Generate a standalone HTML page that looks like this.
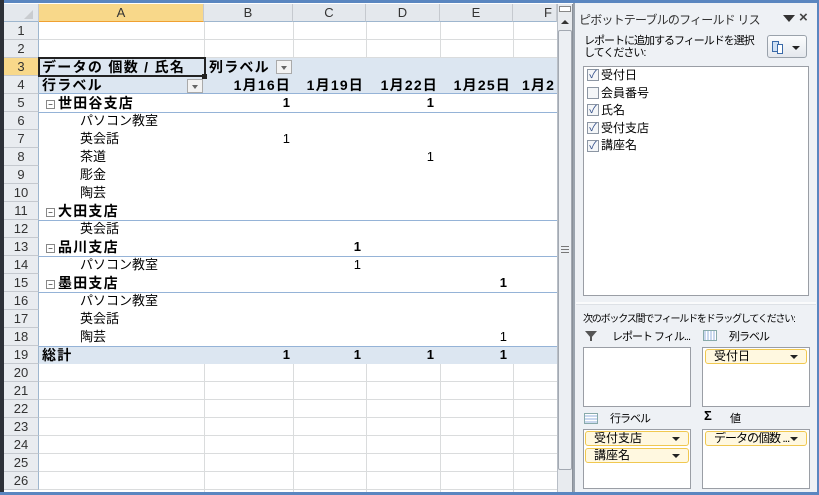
<!DOCTYPE html>
<html><head><meta charset="utf-8"><style>
*{margin:0;padding:0;box-sizing:border-box}
body{width:819px;height:495px;overflow:hidden;background:#fff;font-family:"Liberation Sans","Noto Sans CJK JP",sans-serif;font-size:13px;color:#000;position:relative}
.a{position:absolute}
.rh{position:absolute;left:4px;width:35px;height:18px;background:#e9ecf0;border-bottom:1px solid #c5c9cf;border-right:1px solid #9eb6ce;text-align:center;line-height:18px;font-size:13px;color:#333}
.ch{position:absolute;top:4px;height:18px;background:#e4e8ed;border-right:1px solid #c5c9cf;border-bottom:1px solid #9eb6ce;text-align:center;line-height:17px;color:#333}
.vg{position:absolute;width:1px;background:#dadcdd}
.hg{position:absolute;height:1px;background:#dadcdd;left:39px;width:518px}
.t{position:absolute;height:18px;line-height:18px;white-space:nowrap}
.b{font-weight:bold}
.r{text-align:right}
.ls{letter-spacing:1.2px}
.bl{position:absolute;left:39px;width:518px;height:1px;background:#95b3d7}
.dd{position:absolute;width:16px;height:14px;border:1px solid #aaa;background:#f3f3f3}
.dd:after{content:"";position:absolute;left:4px;top:5px;border-left:3.5px solid transparent;border-right:3.5px solid transparent;border-top:4px solid #666}
.cb{position:absolute;left:587px;width:12px;height:12px;border:1px solid #8c96a3;background:#f4f6f8;font-size:11px;line-height:10px;color:#34508b;text-align:center}
.fl{position:absolute;left:601px;font-size:12px}
.box{position:absolute;background:#fff;border:1px solid #9a9ea5}
.pill{position:absolute;height:15px;background:#fff8e0;border:1px solid #f0c850;border-radius:3px;font-size:12px;line-height:13px;padding-left:8px;color:#000;overflow:hidden;white-space:nowrap}
.pill:after{content:"";position:absolute;right:8px;top:5px;border-left:4px solid transparent;border-right:4px solid transparent;border-top:4px solid #222}
.sm{font-size:11px;position:absolute;white-space:nowrap;letter-spacing:-1px}
.ex{display:inline-block;width:9px;height:9px;border:1px solid #888;font-size:8px;line-height:7px;text-align:center;vertical-align:1px;margin-right:3px;font-weight:normal;letter-spacing:0}
</style></head><body>
<div class="a" style="left:0;top:0;width:819px;height:3px;background:#5a86c0"></div>
<div class="a" style="left:0;top:0;width:4px;height:495px;background:#2d3138"></div>
<div class="a" style="left:0;top:492px;width:819px;height:3px;background:#5a86c0"></div>
<div class="a" style="left:4px;top:4px;width:35px;height:18px;background:#e4e8ed;border-right:1px solid #c5c9cf;border-bottom:1px solid #9eb6ce"></div>
<div class="a" style="left:24px;top:10px;width:0;height:0;border-left:9px solid transparent;border-bottom:9px solid #c9ccd0"></div>
<div class="ch" style="left:39px;width:165px;background:#f8d88a;border-bottom:1px solid #f0a030">A</div>
<div class="ch" style="left:204px;width:89px">B</div>
<div class="ch" style="left:293px;width:73px">C</div>
<div class="ch" style="left:366px;width:74px">D</div>
<div class="ch" style="left:440px;width:73px">E</div>
<div class="ch" style="left:513px;width:44px;text-align:right;padding-right:4px">F</div>
<div class="rh" style="top:22px">1</div><div class="rh" style="top:40px">2</div>
<div class="rh" style="top:58px;background:#f8d88a">3</div><div class="rh" style="top:76px">4</div>
<div class="rh" style="top:94px">5</div><div class="rh" style="top:112px">6</div>
<div class="rh" style="top:130px">7</div><div class="rh" style="top:148px">8</div>
<div class="rh" style="top:166px">9</div><div class="rh" style="top:184px">10</div>
<div class="rh" style="top:202px">11</div><div class="rh" style="top:220px">12</div>
<div class="rh" style="top:238px">13</div><div class="rh" style="top:256px">14</div>
<div class="rh" style="top:274px">15</div><div class="rh" style="top:292px">16</div>
<div class="rh" style="top:310px">17</div><div class="rh" style="top:328px">18</div>
<div class="rh" style="top:346px">19</div><div class="rh" style="top:364px">20</div>
<div class="rh" style="top:382px">21</div><div class="rh" style="top:400px">22</div>
<div class="rh" style="top:418px">23</div><div class="rh" style="top:436px">24</div>
<div class="rh" style="top:454px">25</div><div class="rh" style="top:472px">26</div>
<div class="hg" style="top:39px"></div><div class="hg" style="top:57px"></div>
<div class="vg" style="left:204px;top:22px;height:36px"></div>
<div class="vg" style="left:293px;top:22px;height:36px"></div>
<div class="vg" style="left:366px;top:22px;height:36px"></div>
<div class="vg" style="left:440px;top:22px;height:36px"></div>
<div class="vg" style="left:513px;top:22px;height:36px"></div>
<div class="hg" style="top:381px"></div><div class="hg" style="top:399px"></div>
<div class="hg" style="top:417px"></div><div class="hg" style="top:435px"></div>
<div class="hg" style="top:453px"></div><div class="hg" style="top:471px"></div>
<div class="hg" style="top:489px"></div>
<div class="vg" style="left:204px;top:364px;height:128px"></div>
<div class="vg" style="left:293px;top:364px;height:128px"></div>
<div class="vg" style="left:366px;top:364px;height:128px"></div>
<div class="vg" style="left:440px;top:364px;height:128px"></div>
<div class="vg" style="left:513px;top:364px;height:128px"></div>
<div class="a" style="left:39px;top:58px;width:518px;height:36px;background:#dce6f1"></div>
<div class="bl" style="top:93px"></div>
<div class="a" style="left:39px;top:346px;width:518px;height:18px;background:#dce6f1;border-top:1px solid #95b3d7"></div>
<div class="bl" style="top:112px"></div>
<div class="bl" style="top:220px"></div>
<div class="bl" style="top:256px"></div>
<div class="bl" style="top:292px"></div>
<div class="a" style="left:38px;top:57px;width:168px;height:20px;border:2px solid #222"></div>
<div class="a" style="left:202px;top:74px;width:5px;height:5px;background:#222"></div>
<div class="t b" style="left:42px;top:58px;font-size:14px;letter-spacing:1.3px">データの 個数 / 氏名</div>
<div class="t b ls" style="left:209px;top:58px;font-size:14px">列ラベル</div>
<div class="dd" style="left:276px;top:60px"></div>
<div class="t b ls" style="left:42px;top:76px;font-size:14px">行ラベル</div>
<div class="dd" style="left:187px;top:79px"></div>
<div class="t b r ls" style="left:204px;top:76px;width:87px;font-size:14px">1月16日</div>
<div class="t b r ls" style="left:293px;top:76px;width:71px;font-size:14px">1月19日</div>
<div class="t b r ls" style="left:366px;top:76px;width:72px;font-size:14px">1月22日</div>
<div class="t b r ls" style="left:440px;top:76px;width:71px;font-size:14px">1月25日</div>
<div class="t b ls" style="left:522px;top:76px;width:35px;overflow:hidden;font-size:14px">1月2</div>
<div class="t b ls" style="left:46px;top:94px;font-size:14px"><span class="ex">−</span>世田谷支店</div>
<div class="t b r" style="left:204px;top:94px;width:86px">1</div>
<div class="t b r" style="left:366px;top:94px;width:68px">1</div>
<div class="t" style="left:80px;top:112px">パソコン教室</div>
<div class="t" style="left:80px;top:130px">英会話</div><div class="t r" style="left:204px;top:130px;width:86px">1</div>
<div class="t" style="left:80px;top:148px">茶道</div><div class="t r" style="left:366px;top:148px;width:68px">1</div>
<div class="t" style="left:80px;top:166px">彫金</div>
<div class="t" style="left:80px;top:184px">陶芸</div>
<div class="t b ls" style="left:46px;top:202px;font-size:14px"><span class="ex">−</span>大田支店</div>
<div class="t" style="left:80px;top:220px">英会話</div>
<div class="t b ls" style="left:46px;top:238px;font-size:14px"><span class="ex">−</span>品川支店</div>
<div class="t b r" style="left:293px;top:238px;width:68px">1</div>
<div class="t" style="left:80px;top:256px">パソコン教室</div><div class="t r" style="left:293px;top:256px;width:68px">1</div>
<div class="t b ls" style="left:46px;top:274px;font-size:14px"><span class="ex">−</span>墨田支店</div>
<div class="t b r" style="left:440px;top:274px;width:67px">1</div>
<div class="t" style="left:80px;top:292px">パソコン教室</div>
<div class="t" style="left:80px;top:310px">英会話</div>
<div class="t" style="left:80px;top:328px">陶芸</div><div class="t r" style="left:440px;top:328px;width:67px">1</div>
<div class="t b ls" style="left:42px;top:346px;font-size:14px">総計</div>
<div class="t b r" style="left:204px;top:346px;width:86px">1</div>
<div class="t b r" style="left:293px;top:346px;width:68px">1</div>
<div class="t b r" style="left:366px;top:346px;width:68px">1</div>
<div class="t b r" style="left:440px;top:346px;width:67px">1</div>
<div class="a" style="left:557px;top:4px;width:16px;height:488px;background:#e8ebef;border-left:1px solid #b8bec6;border-right:1px solid #8a9099"></div>
<div class="a" style="left:559px;top:6px;width:12px;height:6px;border:1px solid #888;background:#fff"></div>
<div class="a" style="left:561px;top:20px;border-left:4px solid transparent;border-right:4px solid transparent;border-bottom:4px solid #333"></div>
<div class="a" style="left:558px;top:30px;width:14px;height:440px;background:#eceff3;border:1px solid #a3a9b2;border-radius:2px"></div>
<div class="a" style="left:561px;top:246px;width:8px;height:7px;border-top:1px solid #777;border-bottom:1px solid #777"></div>
<div class="a" style="left:561px;top:249px;width:8px;height:1px;background:#777"></div>
<div class="a" style="left:573px;top:3px;width:246px;height:489px;background:#eef1f5;border-left:2px solid #9ba3ad"></div>
<div class="a" style="left:817px;top:3px;width:2px;height:489px;background:#5a86c0"></div>
<div class="a" style="left:579px;top:11px;font-size:12px;letter-spacing:-0.8px;color:#333;white-space:nowrap">ピボットテーブルのフィールド リス</div>
<div class="a" style="left:783px;top:15px;border-left:6px solid transparent;border-right:6px solid transparent;border-top:7px solid #333"></div>
<div class="a b" style="left:799px;top:9px;font-size:15px;color:#444">×</div>
<div class="sm" style="left:584px;top:35px;line-height:12px">レポートに追加するフィールドを選択<br>してください:</div>
<div class="a" style="left:767px;top:35px;width:40px;height:23px;border:1px solid #9aa2ab;border-radius:3px;background:linear-gradient(#fbfcfd,#e4e8ed)"></div>
<div class="a" style="left:772px;top:41px;width:7px;height:11px;border:1px solid #3a6aa8;background:#cfe0f3"></div>
<div class="a" style="left:777px;top:44px;width:6px;height:10px;border:1px solid #3a6aa8;background:#fff"></div>
<div class="a" style="left:792px;top:46px;border-left:4px solid transparent;border-right:4px solid transparent;border-top:4px solid #222"></div>
<div class="box" style="left:583px;top:66px;width:226px;height:230px"></div>
<div class="cb" style="top:69px">✓</div><div class="fl" style="top:66px">受付日</div>
<div class="cb" style="top:87px"></div><div class="fl" style="top:84px">会員番号</div>
<div class="cb" style="top:104px">✓</div><div class="fl" style="top:101px">氏名</div>
<div class="cb" style="top:122px">✓</div><div class="fl" style="top:119px">受付支店</div>
<div class="cb" style="top:140px">✓</div><div class="fl" style="top:136px">講座名</div>
<div class="a" style="left:576px;top:302px;width:240px;height:3px;background:#fafbfc;border-bottom:1px solid #dde1e6"></div>
<div class="sm" style="left:583px;top:310px;font-size:10px;letter-spacing:-1.2px">次のボックス間でフィールドをドラッグしてください:</div>
<div class="a" style="left:585px;top:331px;border-left:6px solid transparent;border-right:6px solid transparent;border-top:7px solid #555"></div>
<div class="a" style="left:590px;top:336px;width:2px;height:5px;background:#555"></div>
<div class="sm" style="left:612px;top:328px">レポート フィル...</div>
<div class="a" style="left:703px;top:330px;width:14px;height:11px;border:1px solid #8aa;background:repeating-linear-gradient(90deg,#c9d8ee 0 2px,#fff 2px 3px)"></div>
<div class="sm" style="left:729px;top:328px">列ラベル</div>
<div class="box" style="left:583px;top:347px;width:108px;height:60px"></div>
<div class="box" style="left:702px;top:347px;width:108px;height:60px"></div>
<div class="pill" style="left:705px;top:349px;width:102px">受付日</div>
<div class="a" style="left:584px;top:413px;width:14px;height:11px;border:1px solid #8aa;background:repeating-linear-gradient(0deg,#c9d8ee 0 2px,#fff 2px 3px)"></div>
<div class="sm" style="left:610px;top:410px">行ラベル</div>
<div class="a b" style="left:704px;top:408px;font-size:13px">Σ</div>
<div class="sm" style="left:730px;top:410px">値</div>
<div class="box" style="left:583px;top:429px;width:108px;height:60px"></div>
<div class="box" style="left:702px;top:429px;width:108px;height:60px"></div>
<div class="pill" style="left:585px;top:431px;width:104px">受付支店</div>
<div class="pill" style="left:585px;top:448px;width:104px">講座名</div>
<div class="pill" style="left:705px;top:431px;width:102px;letter-spacing:-1px">データの個数 ...</div>
</body></html>
